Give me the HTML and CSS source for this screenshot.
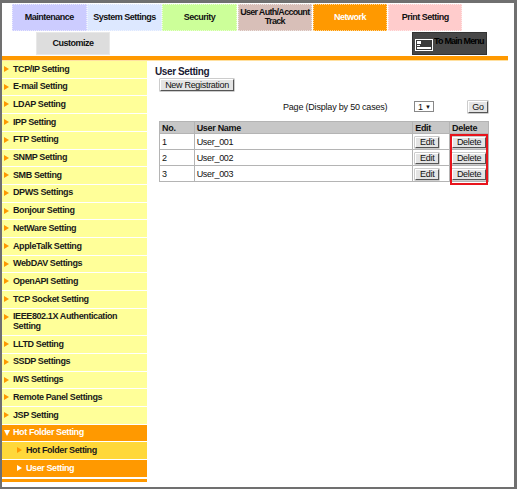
FILE: index.html
```html
<!DOCTYPE html>
<html>
<head>
<meta charset="utf-8">
<link rel="stylesheet" href="styles.css">
</head>
<body>
<div class="frame">
  <div class="tabs">
    <div class="tab t-maint">Maintenance</div>
    <div class="tab t-sys">System Settings</div>
    <div class="tab t-sec">Security</div>
    <div class="tab t-auth"><span class="lbl">User Auth/Account<br>Track</span></div>
    <div class="tab t-net">Network</div>
    <div class="tab t-print">Print Setting</div>
  </div>
  <div class="tabs2">
    <div class="tab t-cust">Customize</div>
    <div class="mainmenu">
      <svg class="mm-icon" width="18" height="12" viewBox="0 0 18 12">
        <rect x="0.5" y="0.5" width="17" height="11" fill="#3a3a3a" stroke="#ffffff"/>
        <rect x="2" y="2" width="4" height="3" fill="#ffffff"/>
        <rect x="2" y="6" width="3" height="1" fill="#ffffff"/>
        <rect x="2" y="8" width="14" height="2" fill="#ffffff"/>
      </svg>
      <span>To Main Menu</span>
    </div>
  </div>
  <div class="orangebar"></div>
  <div class="body">
    <div class="sidebar">
      <div class="item"><i class="arr"></i>TCP/IP Setting</div>
      <div class="item"><i class="arr"></i>E-mail Setting</div>
      <div class="item"><i class="arr"></i>LDAP Setting</div>
      <div class="item"><i class="arr"></i>IPP Setting</div>
      <div class="item"><i class="arr"></i>FTP Setting</div>
      <div class="item"><i class="arr"></i>SNMP Setting</div>
      <div class="item"><i class="arr"></i>SMB Setting</div>
      <div class="item"><i class="arr"></i>DPWS Settings</div>
      <div class="item"><i class="arr"></i>Bonjour Setting</div>
      <div class="item"><i class="arr"></i>NetWare Setting</div>
      <div class="item"><i class="arr"></i>AppleTalk Setting</div>
      <div class="item"><i class="arr"></i>WebDAV Settings</div>
      <div class="item"><i class="arr"></i>OpenAPI Setting</div>
      <div class="item"><i class="arr"></i>TCP Socket Setting</div>
      <div class="item"><i class="arr"></i><span>IEEE802.1X Authentication<br>Setting</span></div>
      <div class="item"><i class="arr"></i>LLTD Setting</div>
      <div class="item"><i class="arr"></i>SSDP Settings</div>
      <div class="item"><i class="arr"></i>IWS Settings</div>
      <div class="item"><i class="arr"></i>Remote Panel Settings</div>
      <div class="item"><i class="arr"></i>JSP Setting</div>
      <div class="item open"><i class="down"></i>Hot Folder Setting</div>
      <div class="item sub"><i class="arr"></i>Hot Folder Setting</div>
      <div class="item sub active"><i class="arr"></i>User Setting</div>
      <div class="sidebar-end"></div>
    </div>
    <div class="content">
      <div class="title">User Setting</div>
      <div class="btn newreg">New Registration</div>
      <div class="pager">
        <span class="pagelabel">Page (Display by 50 cases)</span>
        <span class="select">1 <span class="sel-arrow">&#9660;</span></span>
        <span class="btn go">Go</span>
      </div>
      <div class="tablewrap">
        <table class="users">
          <tr class="head">
            <th class="c-no">No.</th>
            <th class="c-name">User Name</th>
            <th class="c-edit">Edit</th>
            <th class="c-del">Delete</th>
          </tr>
          <tr>
            <td>1</td><td>User_001</td>
            <td><span class="btn cellbtn edit">Edit</span></td>
            <td><span class="btn cellbtn del">Delete</span></td>
          </tr>
          <tr>
            <td>2</td><td>User_002</td>
            <td><span class="btn cellbtn edit">Edit</span></td>
            <td><span class="btn cellbtn del">Delete</span></td>
          </tr>
          <tr>
            <td>3</td><td>User_003</td>
            <td><span class="btn cellbtn edit">Edit</span></td>
            <td><span class="btn cellbtn del">Delete</span></td>
          </tr>
        </table>
        <div class="redbox"></div>
      </div>
    </div>
  </div>
</div>
</body>
</html>
```
FILE: styles.css
```css
html, body {
  margin: 0;
  padding: 0;
  background: #ffffff;
}
.frame {
  box-sizing: border-box;
  width: 517px;
  height: 489px;
  border-style: solid;
  border-color: #707070;
  border-width: 3px 3px 2px 2px;
  background: #ffffff;
  font-family: "Liberation Sans", Arial, sans-serif;
  color: #111111;
  overflow: hidden;
}
.tabs {
  display: flex;
  gap: 0.7px;
  padding: 1px 0 0 10px;
  height: 27px;
}
.tab {
  box-sizing: border-box;
  width: 74.5px;
  height: 27px;
  display: flex;
  align-items: center;
  justify-content: center;
  text-align: center;
  font-size: 9px;
  font-weight: bold;
  letter-spacing: -0.5px;
  line-height: 9px;
  border: 1px dotted rgba(255,255,255,0.6);
}
.t-maint { background: #ccccff; }
.t-sys { background: #dde8ff; }
.t-sec { background: #ccff99; }
.t-auth {
  background: #d8bfb8;
  align-items: flex-start;
  padding-top: 3px;
  letter-spacing: -0.7px;
}
.t-auth .lbl {
  display: block;
  white-space: nowrap;
  text-align: center;
}
.t-net { background: #ff9900; color: #ffffff; }
.t-print { background: #ffcccc; }
.tabs2 {
  display: flex;
  justify-content: space-between;
  padding: 1px 27px 0 34px;
  height: 23px;
}
.t-cust {
  background: #dddddd;
  width: 74px;
  height: 23px;
  border: 1px solid #e8e8e8;
}
.mainmenu {
  box-sizing: border-box;
  width: 75px;
  height: 23px;
  background: #474747;
  border: 1px solid #333333;
  display: flex;
  align-items: flex-start;
  padding: 6px 0 0 2px;
  gap: 1px;
}
.mainmenu span {
  font-size: 9px;
  font-weight: bold;
  letter-spacing: -0.8px;
  color: #000000;
  line-height: 9px;
  margin-top: -2px;
  white-space: nowrap;
}
.mm-icon { flex: none; }
.orangebar {
  height: 4px;
  background: #ff9900;
  margin: 1px 6px 0 0;
  border-bottom: 1px solid #ffe0a0;
}
.body {
  display: flex;
}
.sidebar {
  width: 145px;
  flex: none;
}
.item {
  display: flex;
  align-items: flex-start;
  background: #ffff99;
  border-bottom: 1px solid #ffffff;
  padding: 3.5px 0 3.5px 2px;
  font-size: 9px;
  font-weight: bold;
  line-height: 9.7px;
  letter-spacing: -0.4px;
  color: #1a1a1a;
}
.arr {
  flex: none;
  width: 0;
  height: 0;
  border-left: 5px solid #ff9900;
  border-top: 3.5px solid transparent;
  border-bottom: 3.5px solid transparent;
  margin: 1.5px 4px 0 0;
}
.down {
  flex: none;
  width: 0;
  height: 0;
  border-top: 6px solid #ffffff;
  border-left: 3px solid transparent;
  border-right: 3px solid transparent;
  margin: 2px 3px 0 0;
}
.item.open {
  background: #ff9900;
  color: #ffffff;
}
.item.sub {
  background: #ffd83a;
  padding-left: 15px;
}
.item.sub.active {
  background: #ff9900;
  color: #ffffff;
}
.item.sub.active .arr {
  border-left-color: #ffffff;
}
.sidebar-end {
  height: 3px;
  margin-top: 1px;
  background: #ff9900;
}
.content {
  flex: 1;
  padding: 5px 0 0 8px;
  font-size: 9px;
}
.title {
  font-size: 10px;
  font-weight: bold;
  letter-spacing: -0.4px;
  color: #1a1a33;
  line-height: 11px;
}
.btn {
  box-sizing: border-box;
  display: inline-flex;
  align-items: center;
  justify-content: center;
  background: #e4e4e4;
  border: 1px solid;
  border-color: #ffffff #555555 #555555 #ffffff;
  box-shadow: 0 0 0 0.5px #999999;
  font-size: 9px;
  letter-spacing: -0.3px;
  color: #111111;
}
.newreg {
  width: 74px;
  height: 12px;
  margin: 2px 0 0 5px;
}
.pager {
  display: flex;
  align-items: center;
  height: 13px;
  margin-top: 9px;
  padding-left: 128px;
}
.pagelabel {
  letter-spacing: -0.2px;
  width: 131px;
}
.select {
  box-sizing: border-box;
  display: inline-flex;
  align-items: center;
  width: 20px;
  height: 11px;
  border: 1px solid #888888;
  padding-left: 3px;
  font-size: 9px;
  gap: 2px;
}
.sel-arrow {
  font-size: 6px;
}
.go {
  width: 20px;
  height: 12px;
  margin-left: 34px;
}
.tablewrap {
  position: relative;
  margin: 8px 0 0 4px;
}
.users {
  border-collapse: collapse;
  width: 330px;
  font-size: 9px;
  letter-spacing: -0.3px;
}
.users th, .users td {
  border: 1px solid #b4b4b4;
  padding: 0 0 0 2px;
  text-align: left;
}
.users th {
  height: 11px;
  font-weight: bold;
  line-height: 10px;
  background-color: #c8c8c8;
  background-image: repeating-conic-gradient(#bcbcbc 0 25%, #d2d2d2 0 50%);
  background-size: 2px 2px;
}
.users td {
  height: 15px;
  line-height: 10px;
}
.c-no { width: 32px; }
.c-name { width: 219px; }
.c-edit { width: 34px; }
.c-del { width: 36px; }
.cellbtn {
  height: 11px;
  margin-top: 1px;
}
.edit { width: 24px; }
.del { width: 34px; }
.redbox {
  position: absolute;
  left: 291px;
  top: 13px;
  width: 38px;
  height: 51px;
  box-sizing: border-box;
  border: 2px solid #e8141c;
}
```
